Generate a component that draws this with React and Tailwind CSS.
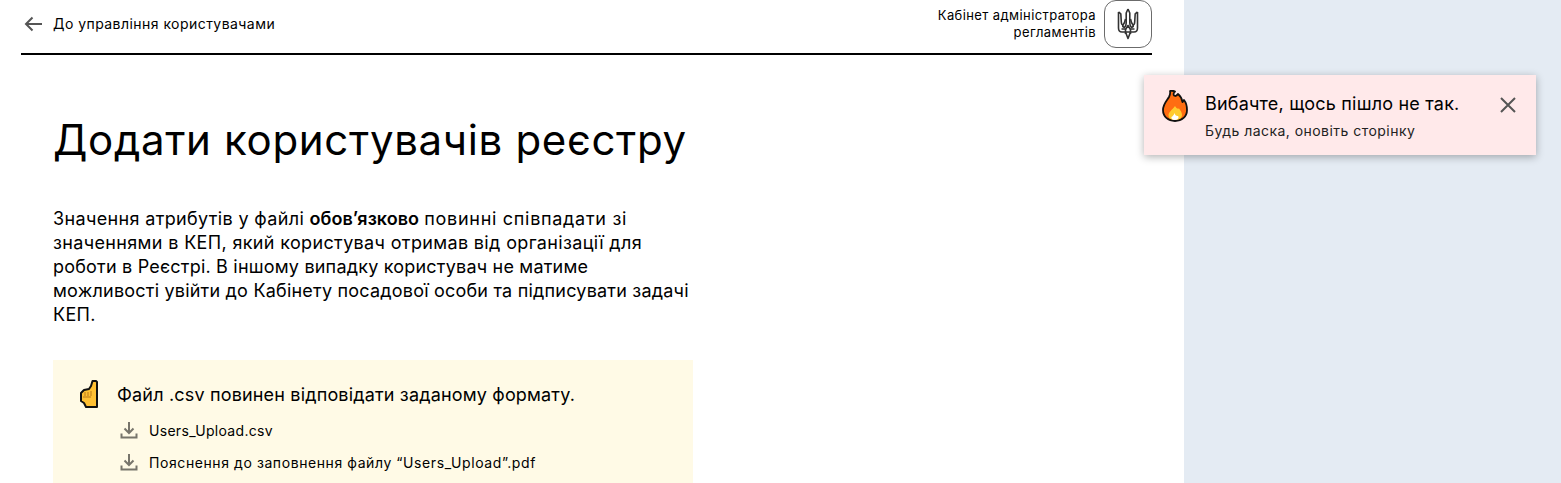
function Trident() {
  return (
    <svg width="22" height="32" viewBox="0 0 22 32" fill="none" stroke="#333" strokeWidth="1.6" strokeLinejoin="round">
      <path d="M11 1 L9.2 5 L9.2 15 Q9.2 18 7.5 19.5 L5.8 18.5 L5.8 16" />
      <path d="M11 1 L12.8 5 L12.8 15 Q12.8 18 14.5 19.5 L16.2 18.5 L16.2 16" />
      <path d="M1.5 4 L3.8 5.8 L4.3 14 Q4.5 17 6 17 Q7.8 15 8.5 11" />
      <path d="M20.5 4 L18.2 5.8 L17.7 14 Q17.5 17 16 17 Q14.2 15 13.5 11" />
      <path d="M1.5 4 L1.5 20 Q1.5 24 5 24 L8.5 24 L11 30.5 L13.5 24 L17 24 Q20.5 24 20.5 20 L20.5 4" />
      <path d="M4.5 21 L8.8 21 L11 17.5 L13.2 21 L17.5 21" />
      <path d="M8.5 21 L8.5 26 M13.5 21 L13.5 26 M8.5 24 L13.5 24" />
    </svg>
  );
}

function Flame() {
  return (
    <svg width="26" height="32" viewBox="0 0 26 32">
      <path d="M8 1 C10 0.5 12 1 13 1.5 C11 3 11 6 13.5 6 C15 5.5 15.5 4.5 16 4 C18.5 6 20 9 20.5 12 C21 11.5 21.5 11 22 10 C24 12.5 25 16 25 20 C25 26.5 20 31 13 31 C6 31 1 26.5 1 20 C1 14 5 10.5 7 7 C8 5 8.5 3 8 1 Z" fill="#FF6D12" stroke="#111" strokeWidth="1.8" strokeLinejoin="round" />
      <path d="M13 16 C14 18 15.5 19 17 18.5 C18.5 20.5 20 22.5 20 25 C20 28 17 30 13 30 C9 30 6.5 28 6.5 25 C6.5 22 10 20 13 16 Z" fill="#FFCB2E" />
      <path d="M12.5 23 C13 25 14.5 26.5 16 26 C17 27 17 29.5 13 30 C10 30 9 28.5 9.5 27 C10.5 26.5 12 25 12.5 23 Z" fill="#fff" />
    </svg>
  );
}

function PointingHand() {
  return (
    <svg width="18" height="28" viewBox="0 0 18 28">
      <path d="M12.5 1 L16 1 L17 2 L17 27 L6 27 L4 23 L1 21 L1 13 L4 10 L9 9 L11 6 Z" fill="#FFC033" stroke="#111" strokeWidth="2" strokeLinejoin="round" />
      <path d="M5 12 L5 16 M8 12 L8 16 M11 11 L11 16 M3 17 L11 17" stroke="#B9791B" strokeWidth="1" fill="none" />
    </svg>
  );
}

function DownloadIcon() {
  return (
    <svg width="18" height="18" viewBox="0 0 18 18" fill="none" stroke="#77746b" strokeWidth="2">
      <path d="M9 1 L9 11.5 M4.5 7.5 L9 12 L13.5 7.5 M1.5 12.5 L1.5 16.5 L16.5 16.5 L16.5 12.5" />
    </svg>
  );
}

function DownloadLink({ children, className }) {
  return (
    <div className="flex items-center gap-[11px] h-[32px]">
      <DownloadIcon />
      <span className={"text-[14px] text-black " + className}>{children}</span>
    </div>
  );
}

export default function App() {
  return (
    <div className="relative h-[483px] overflow-hidden bg-[#e4ebf3] font-['Inter',sans-serif]">
      <div className="w-[1184px] h-[483px] bg-white pl-[21px] pr-[32px]">
        <header className="flex items-center justify-between h-[55px] border-b-2 border-black">
          <div className="flex items-center gap-[11px] pb-[6px] pl-[3px]">
            <svg width="18" height="16" viewBox="0 0 18 16" fill="none" stroke="#555" strokeWidth="2">
              <path d="M18 8 L2 8 M8.5 1.5 L2 8 L8.5 14.5" />
            </svg>
            <span className="text-[14px] tracking-[0.45px] text-black">До управління користувачами</span>
          </div>
          <div className="flex items-center gap-[8px] pb-[5px]">
            <div className="text-[13px] leading-[17px] tracking-[0.4px] text-right text-black">
              Кабінет адміністратора<br />регламентів
            </div>
            <div className="flex items-center justify-center w-[48px] h-[48px] rounded-[12px] border border-[#6b6b6b]">
              <Trident />
            </div>
          </div>
        </header>

        <main className="pl-[32px] w-[672px]">
          <h1 className="mt-[57px] text-[42px] leading-[56px] tracking-[0.67px] text-black whitespace-nowrap">Додати користувачів реєстру</h1>
          <p className="mt-[39px] text-[18px] leading-[24px] tracking-[0.35px] text-black whitespace-nowrap">
            Значення атрибутів у файлі <b className="font-semibold tracking-normal">обов’язково</b> <span className="tracking-[0.7px]">повинні співпадати зі</span><br />
            значеннями в КЕП, який користувач отримав від організації для<br />
            <span className="tracking-[0.2px]">роботи в Реєстрі. В іншому випадку користувач не матиме</span><br />
            <span className="tracking-[0.21px]">можливості увійти до Кабінету посадової особи та підписувати задачі</span><br />
            КЕП.
          </p>
          <div className="mt-[33px] bg-[#fffae6] h-[140px] pl-[27px] pt-[18px]">
            <div className="flex items-center gap-[19px] h-[32px]">
              <PointingHand />
              <span className="text-[18px] tracking-[0.17px] text-black whitespace-nowrap">Файл .csv повинен відповідати заданому формату.</span>
            </div>
            <div className="pl-[40px] mt-[4px]">
              <DownloadLink className="tracking-[0.3px]">Users_Upload.csv</DownloadLink>
              <DownloadLink className="tracking-[0.58px]">Пояснення до заповнення файлу “Users_Upload”.pdf</DownloadLink>
            </div>
          </div>
        </main>
      </div>

      <div className="absolute left-[1144px] top-[75px] w-[392px] h-[80px] flex items-start bg-[#ffe9ea] shadow-[0_2px_8px_rgba(0,0,0,0.3)] pl-[18px] pr-[20px] pt-[15px]">
        <Flame />
        <div className="ml-[17px] flex-1">
          <div className="text-[18px] leading-[28px] tracking-[0.2px] text-black">Вибачте, щось пішло не так.</div>
          <div className="text-[14px] leading-[20px] mt-[3px] tracking-[0.46px] text-[#222]">Будь ласка, оновіть сторінку</div>
        </div>
        <svg className="mt-[7px]" width="16" height="16" viewBox="0 0 16 16" fill="none" stroke="#555" strokeWidth="2">
          <path d="M1 1 L15 15 M15 1 L1 15" />
        </svg>
      </div>
    </div>
  );
}
